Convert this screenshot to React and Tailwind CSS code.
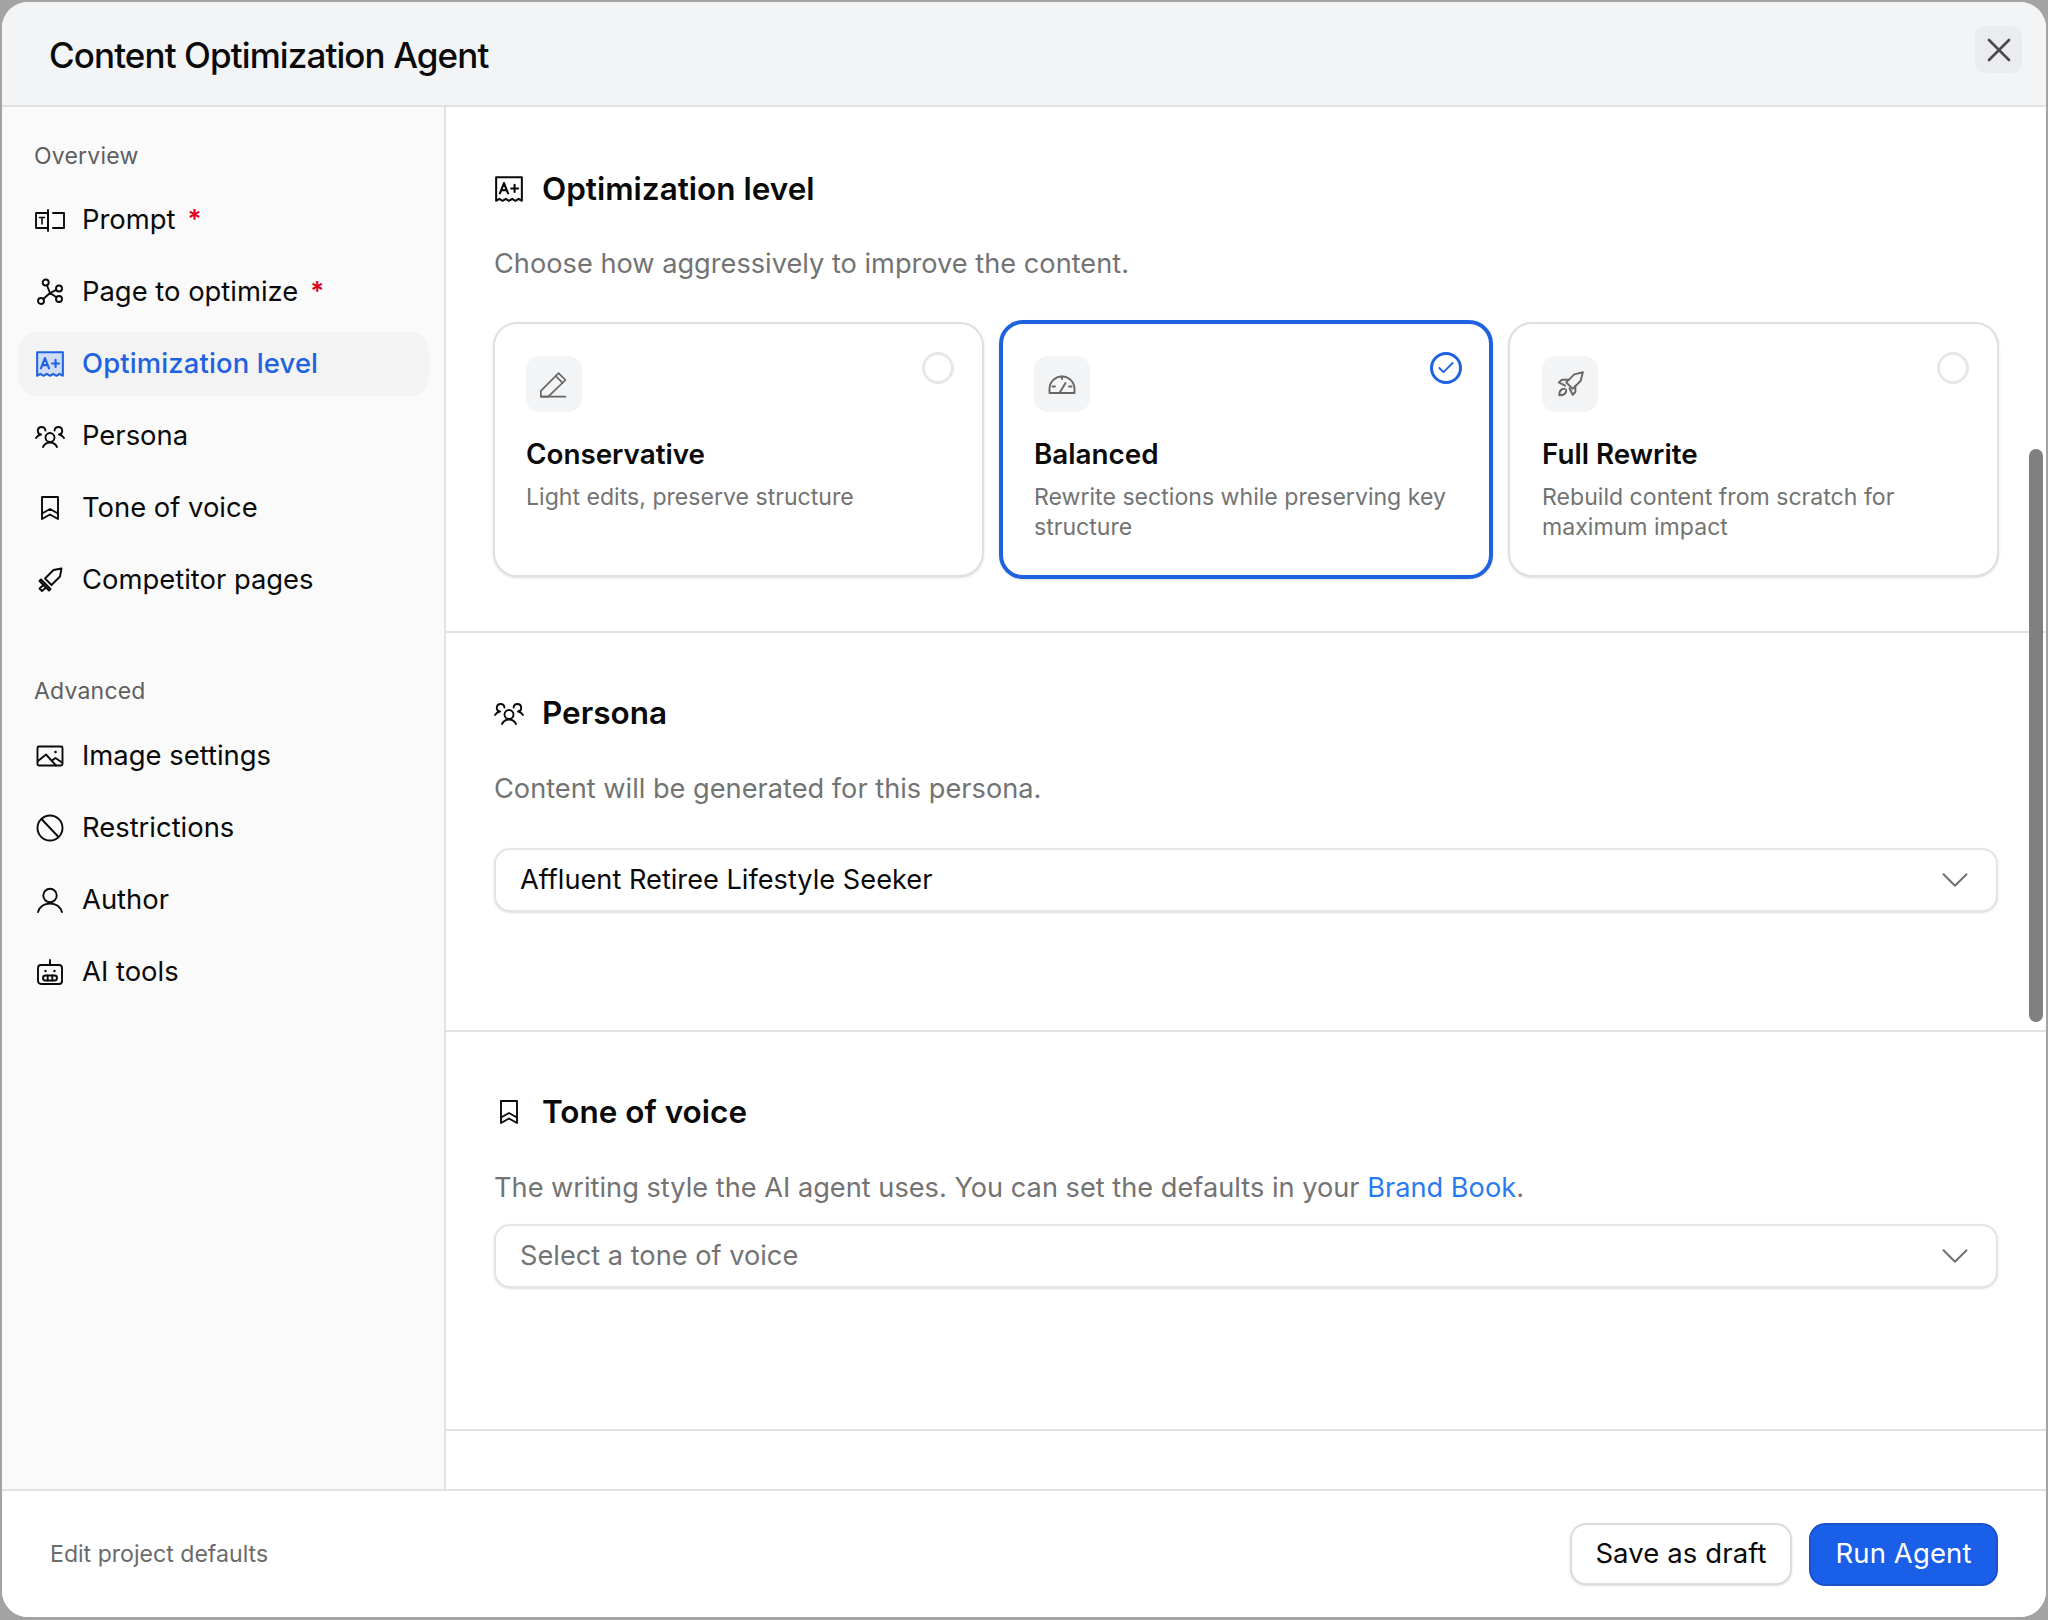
import { X, ChevronDown, Check } from "lucide-react";

const S = ({ children, w = 28, h = 28, vb = "0 0 28 28", sw = 1.9, className = "" }) => (
  <svg width={w} height={h} viewBox={vb} fill="none" stroke="currentColor" strokeWidth={sw} strokeLinecap="round" strokeLinejoin="round" className={"shrink-0 " + className}>
    {children}
  </svg>
);

const PromptIcon = () => (
  <S w={30} vb="0 0 30 28">
    <path d="M1 7h12v15H1z" />
    <path d="M13 4v21" />
    <path d="M18 7h11v15H18" />
    <path d="M4.500 11.500h5M7 11.500v6.500" strokeWidth="1.600" />
  </S>
);
const NetIcon = () => (
  <S>
    <circle cx="9.700" cy="4.500" r="3" />
    <circle cx="23" cy="10.500" r="3" />
    <circle cx="23" cy="21" r="3" />
    <circle cx="5" cy="23" r="3" />
    <path d="M11 7.500l3 7.500M7.200 21L14 15M20.300 11.800L14 15M20.500 19.300L14 15" />
  </S>
);
const GradeIcon = ({ fill }) => (
  <S w={30} h={30} sw={1.900}>
    <path d="M2 3h24v22l-3-1.800-3 1.800-3-1.800-3 1.800-3-1.800-3 1.800-3-1.800-3 1.800z" fill={fill} />
    <path d="M5.500 18l3.800-9.500 3.800 9.500M6.800 15h5M16 13.500h6.500M19.200 10.200v6.500" strokeWidth="2" />
  </S>
);
const PersonaIcon = () => (
  <S w={30} vb="0 0 30 28">
    <circle cx="15" cy="15.500" r="4.500" />
    <path d="M8 25c1.500-3 4-4.500 7-4.500s5.500 1.500 7 4.500" />
    <path d="M10.400 8.500A3.800 3.800 0 1 0 6 12.500C3.500 13 2 14.500 1 16" />
    <path d="M19.600 8.500A3.800 3.800 0 1 1 24 12.500C26.500 13 28 14.500 29 16" />
  </S>
);
const BookmarkIcon = () => (
  <S>
    <path d="M6 3h16v22l-8-4.500L6 25z" />
    <path d="M6 19.500L14 15l8 4.500" />
  </S>
);
const SwordIcon = () => (
  <S>
    <path d="M25.500 2.500L17.500 4 9 12.500l6.500 6.500L24 10.500z" />
    <path d="M5 13.500l-1.500 1.500L13 24.500l1.500-1.500z" />
    <path d="M7.500 19l-4 3.500L6 25l4-3.500" />
  </S>
);
const ImageIcon = () => (
  <S>
    <rect x="1.500" y="4.500" width="25" height="19" rx="1.500" />
    <path d="M2 19l8-6.500 10 11" />
    <path d="M16 18.500l3.500-2.500 6.500 4.500" />
    <circle cx="19.500" cy="10" r="1.300" fill="currentColor" stroke="none" />
  </S>
);
const BanIcon = () => (
  <S>
    <circle cx="14" cy="14" r="12.500" />
    <path d="M5.500 5L22.500 23" />
  </S>
);
const UserIcon = () => (
  <S>
    <circle cx="14" cy="9.500" r="6.700" />
    <path d="M2 26c1.500-5 6-8.500 12-8.500s10.500 3.500 12 8.500" />
  </S>
);
const BotIcon = () => (
  <S>
    <rect x="2" y="7" width="24" height="19" rx="3" />
    <path d="M14 2v5" />
    <circle cx="9.500" cy="13" r="1.200" fill="currentColor" stroke="none" />
    <circle cx="18.500" cy="13" r="1.200" fill="currentColor" stroke="none" />
    <rect x="7" y="17.500" width="14" height="5" rx="2.500" />
    <path d="M11.700 17.500v5M16.300 17.500v5" />
  </S>
);
const PencilIcon = () => (
  <S w={32} h={32} sw={1.500}>
    <path d="M2.500 25v-5L18 4.500 24 10.500 9 25z" />
    <path d="M15.500 7l6 6" />
    <path d="M2.500 25H24" />
  </S>
);
const GaugeIcon = () => (
  <S sw={1.900}>
    <path d="M1.500 23v-4A12.500 12.500 0 0 1 26.500 19v4z" />
    <path d="M11.500 23l6-10" />
    <path d="M14 6.500v2.500M4.500 16.500h2.500M23.500 16.500H21" />
  </S>
);
const RocketIcon = () => (
  <S w={30} h={30} sw={1.800}>
    <path d="M26 3l-8 2-7.500 7.500 6 6L24 11z" />
    <path d="M12.500 10H6.500L3.500 12.500l6 3" />
    <path d="M19 15.500v6L16.500 24l-3-6" />
    <path d="M9 18.500c-3.500 0-5 2.500-5 6 3.500 0 6.500-1.500 6.500-5" />
  </S>
);

const Item = ({ icon, label, req, active }) => (
  <div className={"flex items-center h-16 rounded-[20px] pl-[17px] gap-[17px] text-[27.400px] " + (active ? "bg-[#f3f3f4] text-[#1f62e0] font-medium tracking-[0.150px]" : "text-[#0a0a0a]")}>
    <span className="w-[30px] flex justify-center">{icon}</span>
    <span>{label}</span>
    {req && <span className="text-[#e0001b] -ml-[5px] -mt-[4px] text-[26px] font-semibold">*</span>}
  </div>
);

const Label = ({ children, className = "" }) => (
  <div className={"pl-[16px] h-8 leading-8 text-[23px] tracking-[0.200px] text-[#5f5f5f] " + className}>{children}</div>
);

const Heading = ({ icon, children }) => (
  <div className="flex items-center gap-[18px] h-10">
    <span className="w-[30px] flex justify-center text-[#0a0a0a]">{icon}</span>
    <h2 className="text-[31.500px] leading-10 font-semibold text-[#0a0a0a]">{children}</h2>
  </div>
);

const Desc = ({ children, className = "" }) => (
  <p className={"text-[27.200px] leading-10 text-[#737373] " + className}>{children}</p>
);

const Card = ({ icon, title, desc, selected, padClass = "pl-[31px]" }) => (
  <div className={"relative rounded-[24px] bg-white pt-[32px] shadow-sm " + padClass + " " + (selected ? "h-[259px] -mt-[2px] border-4 border-[#1f62e0] pr-[24px]" : "h-[255px] border-2 border-[#e0e0e0] pr-[32px]")}>
    <div className="w-14 h-14 rounded-[14px] bg-[#f3f4f6] flex items-center justify-center text-[#666666]">{icon}</div>
    <div className="mt-[23px] text-[27.800px] leading-[38px] font-semibold text-[#0a0a0a]">{title}</div>
    <div className="mt-[9px] text-[23.100px] leading-[30px] text-[#737373]">{desc}</div>
    {selected ? (
      <div className="absolute top-[28px] right-[27px] w-8 h-8 rounded-full border-[3px] border-[#1f62e0] text-[#1f62e0] flex items-center justify-center">
        <Check size={20} strokeWidth={2.200} />
      </div>
    ) : (
      <div className="absolute top-[28px] right-[28px] w-8 h-8 rounded-full border-[3px] border-[#e5e7eb]" />
    )}
  </div>
);

const Select = ({ children, placeholder }) => (
  <div className={"flex items-center justify-between h-16 rounded-[16px] border-2 border-[#e4e4e4] bg-white pl-[24px] pr-[18px] text-[27.200px] shadow-sm " + (placeholder ? "text-[#737373]" : "text-[#0a0a0a]")}>
    <span>{children}</span>
    <ChevronDown size={46} strokeWidth={1.100} className="text-[#737373]" />
  </div>
);

export default function App() {
  return (
    <div className="w-[2048px] h-[1620px] bg-[#a3a3a3] pt-[2px] pl-[2px] pr-[2px] pb-[3px] overflow-hidden font-['Inter',sans-serif]">
      <div className="w-full h-full rounded-[26px] overflow-hidden bg-white flex flex-col">
        <header className="h-[105px] shrink-0 bg-[#f3f4f6] border-b-2 border-[#e2e2e2] flex items-start justify-between pl-[47px] pr-[24px]">
          <h1 className="mt-[31px] text-[35px] leading-[44px] font-medium tracking-[-0.900px] text-[#0a0a0a]">Content Optimization Agent</h1>
          <button className="mt-[24px] w-[47px] h-[47px] rounded-[10px] bg-[#ebecef] flex items-center justify-center text-[#4b4b4b]">
            <X size={40} strokeWidth={1.600} />
          </button>
        </header>
        <div className="flex-1 flex min-h-0">
          <aside className="w-[444px] shrink-0 bg-[#fafafa] border-r-2 border-[#e2e2e2] pt-[33px] pl-[16px] pr-[15px]">
            <Label>Overview</Label>
            <div className="mt-4 flex flex-col gap-2">
              <Item icon={<PromptIcon />} label="Prompt" req />
              <Item icon={<NetIcon />} label="Page to optimize" req />
              <Item icon={<GradeIcon fill="#cfdcf8" />} label="Optimization level" active />
              <Item icon={<PersonaIcon />} label="Persona" />
              <Item icon={<BookmarkIcon />} label="Tone of voice" />
              <Item icon={<SwordIcon />} label="Competitor pages" />
            </div>
            <Label className="mt-[63px]">Advanced</Label>
            <div className="mt-[17px] flex flex-col gap-2">
              <Item icon={<ImageIcon />} label="Image settings" />
              <Item icon={<BanIcon />} label="Restrictions" />
              <Item icon={<UserIcon />} label="Author" />
              <Item icon={<BotIcon />} label="AI tools" />
            </div>
          </aside>
          <main className="relative flex-1 overflow-hidden">
            <section className="h-[526px] border-b-2 border-[#e2e2e2] px-[48px] pt-[62px]">
              <Heading icon={<GradeIcon />}>Optimization level</Heading>
              <Desc className="mt-[35px]">Choose how aggressively to improve the content.</Desc>
              <div className="mt-[38px] -ml-[1px] grid grid-cols-[491px_494px_491px] gap-[15px]">
                <Card icon={<PencilIcon />} title="Conservative" desc="Light edits, preserve structure" />
                <Card icon={<GaugeIcon />} title="Balanced" desc="Rewrite sections while preserving key structure" selected />
                <Card icon={<RocketIcon />} title="Full Rewrite" desc="Rebuild content from scratch for maximum impact" padClass="pl-[32px]" />
              </div>
            </section>
            <section className="h-[399px] border-b-2 border-[#e2e2e2] px-[48px] pt-[60px]">
              <Heading icon={<PersonaIcon />}>Persona</Heading>
              <Desc className="mt-[36px]">Content will be generated for this persona.</Desc>
              <div className="mt-[39px]">
                <Select>Affluent Retiree Lifestyle Seeker</Select>
              </div>
            </section>
            <section className="h-[399px] border-b-2 border-[#e2e2e2] px-[48px] pt-[60px]">
              <Heading icon={<BookmarkIcon />}>Tone of voice</Heading>
              <Desc className="mt-[36px]">
                The writing style the AI agent uses. You can set the defaults in your <span className="text-[#2b7bf0]">Brand Book</span>.
              </Desc>
              <div className="mt-4">
                <Select placeholder>Select a tone of voice</Select>
              </div>
            </section>
            <div className="absolute right-[3px] top-[342px] w-[14px] h-[573px] rounded-full bg-[#808080]" />
          </main>
        </div>
        <footer className="h-[128px] shrink-0 border-t-2 border-[#e2e2e2] bg-white flex items-center justify-between pl-[48px] pr-[48px]">
          <span className="text-[23.100px] text-[#6b6b6b]">Edit project defaults</span>
          <div className="flex gap-[17px]">
            <button className="h-[62px] w-[222px] rounded-[16px] border-2 border-[#dcdcdc] bg-white text-[27.500px] tracking-[0.100px] text-[#0a0a0a] shadow-sm">Save as draft</button>
            <button className="h-[63px] w-[189px] rounded-[16px] border-2 border-[#1a52c8] bg-[#1a5fe8] text-[27.500px] tracking-[0.100px] text-white">Run Agent</button>
          </div>
        </footer>
      </div>
    </div>
  );
}
